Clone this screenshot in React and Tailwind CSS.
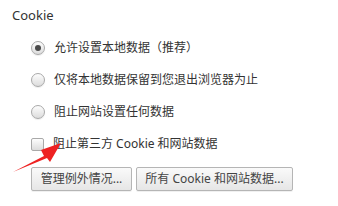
const Radio = ({ checked }) => (
  <span className="relative flex h-[14px] w-[14px] shrink-0 items-center justify-center rounded-full border border-[#a9a9a9] bg-gradient-to-b from-[#fdfdfd] to-[#dcdcdc] shadow-[0_1px_1px_rgba(0,0,0,0.08)]">
    {checked && <span className="h-[6px] w-[6px] rounded-full bg-[#4a4a4a]" />}
  </span>
);

const Checkbox = () => (
  <span className="h-[13px] w-[13px] shrink-0 rounded-[2px] border border-[#a9a9a9] bg-gradient-to-b from-[#fdfdfd] to-[#dcdcdc]" />
);

const Row = ({ control, children }) => (
  <div className="flex h-8 items-center gap-[9px]">
    {control}
    <span>{children}</span>
  </div>
);

const Button = ({ children, className }) => (
  <button
    className={`h-[24px] rounded-[2px] border border-[#b5b5b5] bg-gradient-to-b from-[#fafafa] to-[#e6e6e6] px-[7px] text-[12px] leading-none text-[#444] shadow-[0_1px_0_rgba(0,0,0,0.06)] ${className}`}
  >
    {children}
  </button>
);

export default function App() {
  return (
    <div
      className="relative h-[206px] w-[338px] overflow-hidden bg-white pl-3 pt-[6px] text-[#333]"
      style={{ fontFamily: '"Noto Sans", "Noto Sans CJK SC", sans-serif' }}
    >
      <div className="text-[13px] leading-[18px]">Cookie</div>
      <div className="ml-[19px] mt-[8px] text-[12px]">
        <Row control={<Radio checked />}>允许设置本地数据（推荐）</Row>
        <Row control={<Radio />}>仅将本地数据保留到您退出浏览器为止</Row>
        <Row control={<Radio />}>阻止网站设置任何数据</Row>
        <Row control={<Checkbox />}>阻止第三方 Cookie 和网站数据</Row>
        <div className="mt-[7px] flex gap-[4px]">
          <Button className="w-[101px]">管理例外情况...</Button>
          <Button className="w-[157px]">所有 Cookie 和网站数据...</Button>
        </div>
      </div>
      <svg
        className="pointer-events-none absolute left-0 top-0"
        width="338"
        height="206"
        viewBox="0 0 338 206"
      >
        <polygon
          points="13,172 44,156 41,150 61,143 50,162 47,158"
          fill="#ee2222"
        />
      </svg>
    </div>
  );
}
